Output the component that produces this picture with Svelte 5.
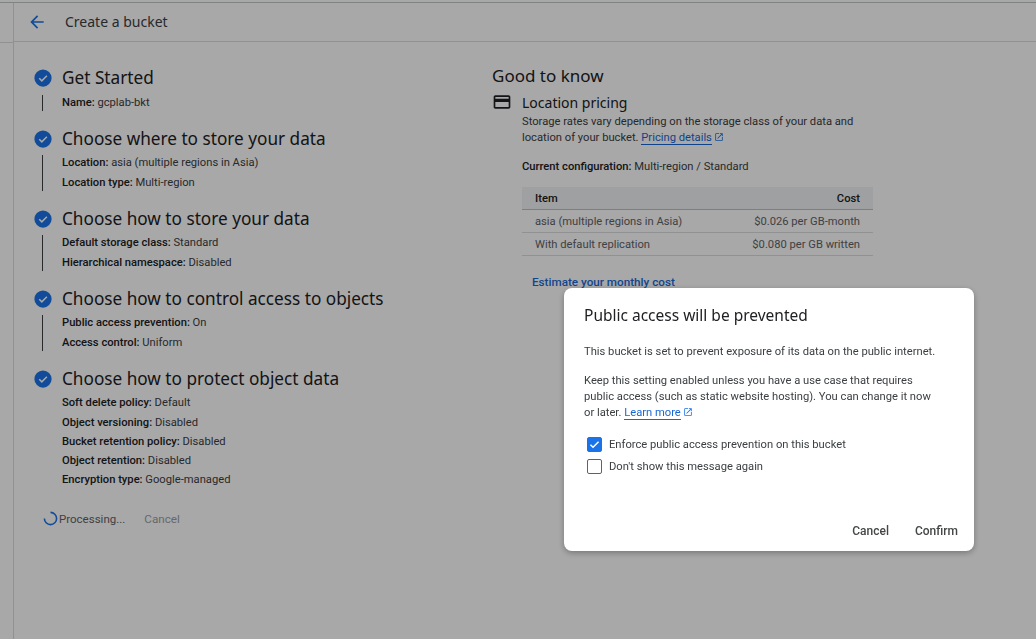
<script>
  const steps = [
    { title: 'Get Started', line: true, rows: [['Name', 'gcplab-bkt']] },
    { title: 'Choose where to store your data', line: true, rows: [['Location', 'asia (multiple regions in Asia)'], ['Location type', 'Multi-region']] },
    { title: 'Choose how to store your data', line: true, rows: [['Default storage class', 'Standard'], ['Hierarchical namespace', 'Disabled']] },
    { title: 'Choose how to control access to objects', line: true, rows: [['Public access prevention', 'On'], ['Access control', 'Uniform']] },
    { title: 'Choose how to protect object data', line: false, tight: true, rows: [['Soft delete policy', 'Default'], ['Object versioning', 'Disabled'], ['Bucket retention policy', 'Disabled'], ['Object retention', 'Disabled'], ['Encryption type', 'Google-managed']] }
  ];

  const prices = [
    ['asia (multiple regions in Asia)', '$0.026 per GB-month'],
    ['With default replication', '$0.080 per GB written']
  ];
</script>

{#snippet launch()}
  <svg class="launch" viewBox="0 0 24 24" width="10" height="10"><path d="M19 19H5V5h7V3H5a2 2 0 0 0-2 2v14a2 2 0 0 0 2 2h14a2 2 0 0 0 2-2v-7h-2v7zM14 3v2h3.59l-9.83 9.83 1.41 1.41L19 6.41V10h2V3h-7z" fill="currentColor"/></svg>
{/snippet}

<div class="page">
  <div class="rail"><div class="rail-head"></div></div>
  <main>
    <header>
      <svg class="back" viewBox="0 0 24 24" width="20" height="20"><path d="M20 11H7.83l5.59-5.59L12 4l-8 8 8 8 1.41-1.41L7.83 13H20v-2z" fill="#1a73e8"/></svg>
      <h1>Create a bucket</h1>
    </header>
    <div class="columns">
      <section class="stepper">
        {#each steps as step}
          <div class="step">
            <div class="step-title">
              <svg viewBox="0 0 24 24" width="18" height="18"><circle cx="12" cy="12" r="11.5" fill="#1a73e8"/><path d="M7 12.4l3.4 3.4L17.2 9" fill="none" stroke="#fff" stroke-width="2"/></svg>
              <h2>{step.title}</h2>
            </div>
            <div class="step-body" class:line={step.line} class:tight={step.tight}>
              {#each step.rows as row}
                <div class="row"><b>{row[0]}:</b> {row[1]}</div>
              {/each}
            </div>
          </div>
        {/each}
        <div class="actions">
          <svg class="spinner" viewBox="0 0 16 16" width="15" height="15"><path d="M1.5 8A6.5 6.5 0 1 0 8 1.5" fill="none" stroke="#1a73e8" stroke-width="1.7"/></svg>
          <span class="processing">Processing...</span>
          <span class="disabled">Cancel</span>
        </div>
      </section>

      <aside>
        <h2 class="good">Good to know</h2>
        <div class="pricing">
          <svg class="card" viewBox="0 0 24 24" width="20" height="20"><path d="M20 4H4c-1.11 0-1.99.89-1.99 2L2 18c0 1.11.89 2 2 2h16c1.11 0 2-.89 2-2V6c0-1.11-.89-2-2-2zm0 14H4v-6h16v6zm0-10H4V6h16v2z" fill="#202124"/></svg>
          <div class="pricing-body">
            <h3>Location pricing</h3>
            <p>Storage rates vary depending on the storage class of your data and location of your bucket. <a href="#top">Pricing details</a>{@render launch()}</p>
            <div class="config"><b>Current configuration:</b> Multi-region / Standard</div>
            <table>
              <thead><tr><th>Item</th><th class="cost">Cost</th></tr></thead>
              <tbody>
                {#each prices as price}
                  <tr><td>{price[0]}</td><td class="cost">{price[1]}</td></tr>
                {/each}
              </tbody>
            </table>
            <div class="estimate">Estimate your monthly cost</div>
          </div>
        </div>
      </aside>
    </div>
  </main>
</div>

<div class="scrim"></div>

<div class="dialog">
  <h2>Public access will be prevented</h2>
  <p class="first">This bucket is set to prevent exposure of its data on the public internet.</p>
  <p class="second">Keep this setting enabled unless you have a use case that requires public access (such as static website hosting). You can change it now or later. <a href="#top">Learn more</a>{@render launch()}</p>
  <div class="check">
    <span class="box on"><svg viewBox="0 0 16 16" width="15" height="15"><path d="M3 8.2l3.2 3.2L13 4.6" fill="none" stroke="#fff" stroke-width="1.8"/></svg></span>
    Enforce public access prevention on this bucket
  </div>
  <div class="check second-check"><span class="box"></span>Don't show this message again</div>
  <div class="buttons"><span>Cancel</span><span>Confirm</span></div>
</div>

<style>
  :global(body) { background: #fff; font-family: Roboto, "Liberation Sans", sans-serif; overflow: hidden; }

  .page { display: flex; height: 637px; border-top: 1px solid #c4c7c5; margin-top: 2px; box-sizing: border-box; color: #202124; font-size: 11.2px; }
  .rail { width: 13px; border-right: 1px solid #dadce0; flex: none; }
  .rail-head { height: 39px; border-bottom: 1px solid #dadce0; }
  main { flex: 1; }
  header { display: flex; align-items: center; height: 38px; border-bottom: 1px solid #dadce0; padding-left: 13px; }
  .back { margin-right: 18px; }
  h1 { margin: 0 0 2px; font-size: 14px; font-weight: 400; font-family: "Noto Sans", sans-serif; color: #3c4043; }

  .columns { display: flex; padding-top: 23px; }
  .stepper { width: 478px; padding-left: 20px; box-sizing: border-box; flex: none; }
  .step-title { display: flex; align-items: center; gap: 10px; height: 24px; }
  .step-title svg { flex: none; margin-top: 2px; }
  h2 { margin: 0; font-weight: 400; font-family: "Noto Sans", sans-serif; font-size: 17.2px; color: #202124; }
  .step-body { position: relative; margin: 3px 0 0 8px; padding-left: 20px; }
  .step-body.line { margin-bottom: 13px; }
  .step:first-child .step-body { margin-top: 4px; }
  .step-body.line::before { content: ''; position: absolute; left: 0; top: 2px; bottom: 2px; border-left: 1px solid #3c4043; }
  .row { height: 20px; line-height: 20px; color: #3c4043; }
  .row b { font-weight: 500; color: #202124; }
  .tight .row { height: 19px; line-height: 19px; }
  .tight .row:first-child { height: 20px; line-height: 20px; }
  .actions { display: flex; align-items: center; margin: 22px 0 0 9px; }
  .processing { color: #5f6368; margin-left: 1px; font-size: 11.5px; }
  .disabled { color: #9aa0a6; margin-left: 19px; font-size: 11.7px; }

  aside { flex: 1; }
  .good { font-size: 17px; line-height: 24px; margin-top: -1px; }
  .pricing { display: flex; gap: 10px; margin-top: 5px; }
  .card { margin-top: -1px; }
  .pricing-body { width: 351px; }
  h3 { margin: 0 0 1px; font-size: 14px; font-weight: 400; font-family: "Noto Sans", sans-serif; line-height: 20px; }
  .pricing-body p { margin: 0; line-height: 16px; color: #3c4043; }
  a { color: #1967d2; text-decoration: none; border-bottom: 1px solid #1967d2; }
  .launch { color: #1a73e8; margin-left: 2px; vertical-align: -1px; }
  .config { margin-top: 13px; color: #3c4043; line-height: 16px; }
  .config b { font-weight: 500; color: #202124; }
  table { width: 351px; border-collapse: collapse; margin-top: 12px; }
  th { height: 22px; font-weight: 500; background: #f1f3f4; text-align: left; padding: 0 13px; border-bottom: 1px solid #bdc1c6; }
  td { height: 22px; padding: 0 13px; color: #5f6368; border-bottom: 1px solid #dadce0; }
  th.cost, td.cost { text-align: right; }
  .estimate { margin: 19px 0 0 10px; color: #1a6ad8; font-weight: 500; font-size: 11.7px; }

  .scrim { position: fixed; inset: 0; background: rgba(0, 0, 0, .34); }

  .dialog { position: fixed; left: 564px; top: 288px; width: 410px; height: 263px; box-sizing: border-box; padding: 17px 20px 0; background: #fff; border-radius: 8px; box-shadow: 0 2px 6px rgba(0, 0, 0, .3); color: #3c4043; font-size: 11.2px; }
  .dialog h2 { font-size: 15.5px; line-height: 20px; color: #202124; }
  .dialog p { margin: 0; line-height: 16px; width: 366px; }
  .first { padding-top: 19px; }
  .dialog p.second { padding-top: 13px; width: 359px; }
  .check { display: flex; align-items: center; gap: 7px; height: 15px; margin-left: 3px; margin-top: 16px; }
  .second-check { margin-top: 7px; }
  .box { width: 15px; height: 15px; box-sizing: border-box; border: 1px solid #5f6368; border-radius: 2px; display: flex; align-items: center; justify-content: center; }
  .box.on { background: #1a73e8; border-color: #1a73e8; }
  .buttons { display: flex; justify-content: flex-end; gap: 26px; position: absolute; right: 16px; bottom: 13px; font-size: 12px; font-weight: 500; color: #444746; }
</style>
